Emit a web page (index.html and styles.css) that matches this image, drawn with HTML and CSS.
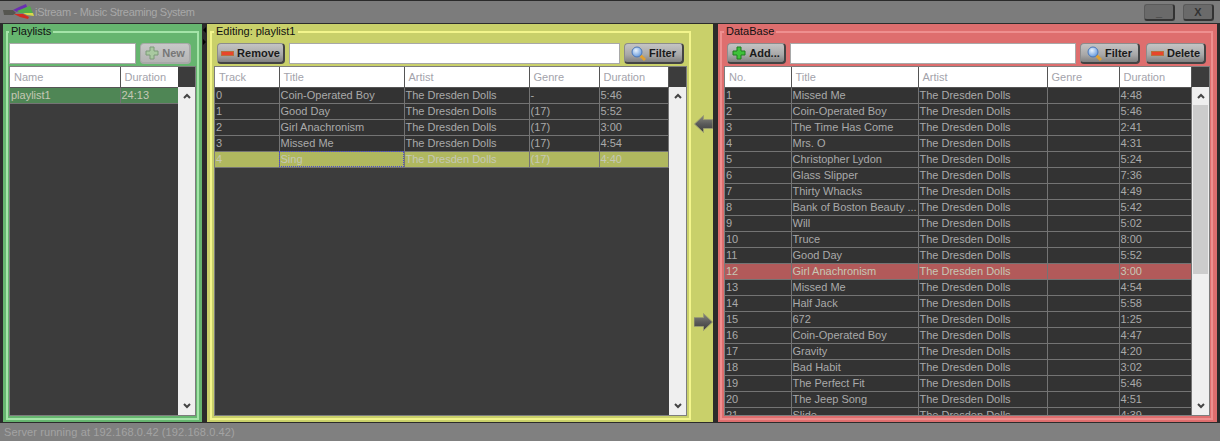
FILE: index.html
```html
<!DOCTYPE html>
<html lang="en">
<head>
  <meta charset="UTF-8" />
  <title>iStream - Music Streaming System</title>
  <link rel="stylesheet" href="styles.css">
</head>
<body>
  <svg class="defs" width="0" height="0">
    <defs>
      <linearGradient id="arrowfill" x1="0" y1="0" x2="0" y2="1">
        <stop offset="0" stop-color="#8a8a80"/>
        <stop offset="0.5" stop-color="#5a5a5a"/>
        <stop offset="1" stop-color="#3e3e3e"/>
      </linearGradient>
      <radialGradient id="lens" cx="0.4" cy="0.35" r="0.7">
        <stop offset="0" stop-color="#e8f2fc"/>
        <stop offset="1" stop-color="#5d94dc"/>
      </radialGradient>
    </defs>
  </svg>

  <div class="titlebar">
    <svg class="logo" width="31" height="16" viewBox="0 0 31 16">
      <path d="M0 6 L10 6 L13 9 L10 11 L1 11 Z" fill="#565650"/>
      <path d="M10 6 L16 3 L23 0 L24 3 L14 8 Z" fill="#6a2fb0"/>
      <path d="M14 7 L24 3 L27 2 L30 9 L17 9 Z" fill="#52ad4a"/>
      <path d="M20 9 L30 9 L31 12 L24 11 Z" fill="#d8d84a"/>
      <path d="M11 10 L20 10 L26 13 L25 15 L17 13 Z" fill="#d42a20"/>
    </svg>
    <span class="title">iStream - Music Streaming System</span>
    <div class="winbtns">
      <button class="winbtn">_</button>
      <button class="winbtn">X</button>
    </div>
  </div>

  <div class="main">
    <section class="panel green">
      <fieldset class="group">
        <legend>Playlists</legend>
        <div class="tools">
          <input class="search" type="text">
          <button class="btn disabled new">
            <svg width="14" height="14" viewBox="0 0 14 14"><path d="M5 1h4v4h4v4H9v4H5V9H1V5h4z" fill="#a9c9a0" stroke="#7d9a78"/></svg>New
          </button>
        </div>
        <div class="grid">
          <div class="tablewrap">
            <table>
              <colgroup><col class="c-name"><col class="c-pdur"></colgroup>
              <thead><tr><th>Name</th><th>Duration</th></tr></thead>
              <tbody><tr class="sel"><td>playlist1</td><td>24:13</td></tr></tbody>
            </table>
          </div>
          <div class="scrollcol">
            <div class="corner"></div>
            <div class="scrollbar">
              <svg class="chev" width="8" height="6" viewBox="0 0 8 6"><path d="M1 5 L4 2 L7 5" fill="none" stroke="#444" stroke-width="2"/></svg>
              <svg class="chev down" width="8" height="6" viewBox="0 0 8 6"><path d="M1 1 L4 4 L7 1" fill="none" stroke="#444" stroke-width="2"/></svg>
            </div>
          </div>
        </div>
      </fieldset>
    </section>

    <div class="splitter">
      <i class="tri left"></i>
      <i class="tri right"></i>
    </div>

    <section class="panel yellow">
      <fieldset class="group">
        <legend>Editing: playlist1</legend>
        <div class="tools">
          <button class="btn remove">
            <svg width="13" height="5" viewBox="0 0 13 5"><rect x="0.5" y="0.5" width="12" height="4" fill="#e8452c" stroke="#b8703c"/></svg>Remove
          </button>
          <input class="search" type="text">
          <button class="btn filter">
            <svg width="15" height="15" viewBox="0 0 15 15"><path d="M9 9 L14 14" stroke="#e0a030" stroke-width="3"/><circle cx="6" cy="6" r="5" fill="url(#lens)" stroke="#4c78b8"/></svg>Filter
          </button>
        </div>
        <div class="grid">
          <div class="tablewrap">
            <table>
              <colgroup><col class="c-track"><col class="c-title"><col class="c-artist"><col class="c-genre"><col class="c-dur"></colgroup>
              <thead><tr><th>Track</th><th>Title</th><th>Artist</th><th>Genre</th><th>Duration</th></tr></thead>
              <tbody>
                <tr><td>0</td><td>Coin-Operated Boy</td><td>The Dresden Dolls</td><td>-</td><td>5:46</td></tr>
                <tr><td>1</td><td>Good Day</td><td>The Dresden Dolls</td><td>(17)</td><td>5:52</td></tr>
                <tr><td>2</td><td>Girl Anachronism</td><td>The Dresden Dolls</td><td>(17)</td><td>3:00</td></tr>
                <tr><td>3</td><td>Missed Me</td><td>The Dresden Dolls</td><td>(17)</td><td>4:54</td></tr>
                <tr class="sel"><td>4</td><td class="focus">Sing</td><td>The Dresden Dolls</td><td>(17)</td><td>4:40</td></tr>
              </tbody>
            </table>
          </div>
          <div class="scrollcol">
            <div class="corner"></div>
            <div class="scrollbar">
              <svg class="chev" width="8" height="6" viewBox="0 0 8 6"><path d="M1 5 L4 2 L7 5" fill="none" stroke="#444" stroke-width="2"/></svg>
              <svg class="chev down" width="8" height="6" viewBox="0 0 8 6"><path d="M1 1 L4 4 L7 1" fill="none" stroke="#444" stroke-width="2"/></svg>
            </div>
          </div>
        </div>
      </fieldset>
      <div class="arrows">
        <svg width="19" height="18" viewBox="0 0 19 18"><path d="M0.5 9 L9.5 0.5 V4.5 H19 V13.5 H9.5 V17.5 Z" fill="url(#arrowfill)" stroke="#9a9c70"/></svg>
        <svg width="19" height="18" viewBox="0 0 19 18"><path d="M18.5 9 L9.5 0.5 V4.5 H0 V13.5 H9.5 V17.5 Z" fill="url(#arrowfill)" stroke="#9a9c70"/></svg>
      </div>
    </section>

    <div class="splitter"></div>

    <section class="panel red">
      <fieldset class="group">
        <legend>DataBase</legend>
        <div class="tools">
          <button class="btn add">
            <svg width="14" height="14" viewBox="0 0 14 14"><path d="M5 1h4v4h4v4H9v4H5V9H1V5h4z" fill="#3ec23a" stroke="#1f7d1f"/></svg>Add...
          </button>
          <input class="search" type="text">
          <button class="btn filter">
            <svg width="15" height="15" viewBox="0 0 15 15"><path d="M9 9 L14 14" stroke="#e0a030" stroke-width="3"/><circle cx="6" cy="6" r="5" fill="url(#lens)" stroke="#4c78b8"/></svg>Filter
          </button>
          <button class="btn delete">
            <svg width="13" height="5" viewBox="0 0 13 5"><rect x="0.5" y="0.5" width="12" height="4" fill="#e8452c" stroke="#b8703c"/></svg>Delete
          </button>
        </div>
        <div class="grid">
          <div class="tablewrap">
            <table>
              <colgroup><col class="c-no"><col class="c-dtitle"><col class="c-dartist"><col class="c-dgenre"><col class="c-ddur"></colgroup>
              <thead><tr><th>No.</th><th>Title</th><th>Artist</th><th>Genre</th><th>Duration</th></tr></thead>
              <tbody>
                <tr><td>1</td><td>Missed Me</td><td>The Dresden Dolls</td><td></td><td>4:48</td></tr>
                <tr><td>2</td><td>Coin-Operated Boy</td><td>The Dresden Dolls</td><td></td><td>5:46</td></tr>
                <tr><td>3</td><td>The Time Has Come</td><td>The Dresden Dolls</td><td></td><td>2:41</td></tr>
                <tr><td>4</td><td>Mrs. O</td><td>The Dresden Dolls</td><td></td><td>4:31</td></tr>
                <tr><td>5</td><td>Christopher Lydon</td><td>The Dresden Dolls</td><td></td><td>5:24</td></tr>
                <tr><td>6</td><td>Glass Slipper</td><td>The Dresden Dolls</td><td></td><td>7:36</td></tr>
                <tr><td>7</td><td>Thirty Whacks</td><td>The Dresden Dolls</td><td></td><td>4:49</td></tr>
                <tr><td>8</td><td>Bank of Boston Beauty ...</td><td>The Dresden Dolls</td><td></td><td>5:42</td></tr>
                <tr><td>9</td><td>Will</td><td>The Dresden Dolls</td><td></td><td>5:02</td></tr>
                <tr><td>10</td><td>Truce</td><td>The Dresden Dolls</td><td></td><td>8:00</td></tr>
                <tr><td>11</td><td>Good Day</td><td>The Dresden Dolls</td><td></td><td>5:52</td></tr>
                <tr class="sel"><td>12</td><td>Girl Anachronism</td><td>The Dresden Dolls</td><td></td><td>3:00</td></tr>
                <tr><td>13</td><td>Missed Me</td><td>The Dresden Dolls</td><td></td><td>4:54</td></tr>
                <tr><td>14</td><td>Half Jack</td><td>The Dresden Dolls</td><td></td><td>5:58</td></tr>
                <tr><td>15</td><td>672</td><td>The Dresden Dolls</td><td></td><td>1:25</td></tr>
                <tr><td>16</td><td>Coin-Operated Boy</td><td>The Dresden Dolls</td><td></td><td>4:47</td></tr>
                <tr><td>17</td><td>Gravity</td><td>The Dresden Dolls</td><td></td><td>4:20</td></tr>
                <tr><td>18</td><td>Bad Habit</td><td>The Dresden Dolls</td><td></td><td>3:02</td></tr>
                <tr><td>19</td><td>The Perfect Fit</td><td>The Dresden Dolls</td><td></td><td>5:46</td></tr>
                <tr><td>20</td><td>The Jeep Song</td><td>The Dresden Dolls</td><td></td><td>4:51</td></tr>
                <tr><td>21</td><td>Slide</td><td>The Dresden Dolls</td><td></td><td>4:39</td></tr>
              </tbody>
            </table>
          </div>
          <div class="scrollcol">
            <div class="corner"></div>
            <div class="scrollbar">
              <svg class="chev" width="8" height="6" viewBox="0 0 8 6"><path d="M1 5 L4 2 L7 5" fill="none" stroke="#444" stroke-width="2"/></svg>
              <div class="thumb"></div>
              <svg class="chev down" width="8" height="6" viewBox="0 0 8 6"><path d="M1 1 L4 4 L7 1" fill="none" stroke="#444" stroke-width="2"/></svg>
            </div>
          </div>
        </div>
      </fieldset>
    </section>
  </div>

  <div class="statusbar">Server running at 192.168.0.42 (192.168.0.42)</div>
</body>
</html>
```

FILE: styles.css
```css
* {
  box-sizing: border-box;
}

body {
  margin: 0;
  width: 1220px;
  height: 441px;
  overflow: hidden;
  display: flex;
  flex-direction: column;
  font-family: "Liberation Sans", Arial, sans-serif;
  font-size: 11px;
  background: #808080;
}

.defs {
  position: absolute;
}

/* title bar */
.titlebar {
  height: 23px;
  flex: none;
  display: flex;
  align-items: center;
  padding: 0 6px 0 3px;
  background: #7c7c7c;
  border-top: 1px solid #2a2a2a;
}

.logo {
  flex: none;
}

.title {
  margin-left: 1px;
  font-size: 11px;
  letter-spacing: -0.3px;
  color: #a8a8a8;
}

.winbtns {
  margin-left: auto;
  display: flex;
  gap: 8px;
}

.winbtn {
  width: 31px;
  height: 17px;
  padding: 0;
  font: bold 11px "Liberation Sans", sans-serif;
  color: #333;
  background: #6a6a6a;
  border: 1px solid #5a5a5a;
  border-right: 2px solid #333;
  border-bottom: 2px solid #333;
  border-radius: 3px;
}

/* main area */
.main {
  flex: 1;
  min-height: 0;
  display: flex;
  padding: 1px 3px;
  background: #2b2b2b;
}

.panel {
  display: flex;
  flex: none;
  min-width: 0;
}

.green {
  width: 199px;
  background: #66b56f;
  --light: #a4e4a8;
  --sel: #4f8655;
}

.yellow {
  width: 506px;
  background: #c9d06a;
  --light: #f3f58c;
  --sel: #b0b85f;
}

.red {
  width: 499px;
  background: #de6e6e;
  --light: #ee8f8f;
  --sel: #b25a5a;
}

.splitter {
  width: 5px;
  flex: none;
  position: relative;
}

.tri {
  position: absolute;
  left: 1px;
  width: 0;
  height: 0;
  border-top: 3px solid transparent;
  border-bottom: 3px solid transparent;
}

.tri.left {
  top: 3px;
  border-right: 3px solid #000;
}

.tri.right {
  top: 15px;
  border-left: 3px solid #000;
}

.group {
  flex: none;
  min-width: 0;
  margin: 1px 3px 2px 3px;
  padding: 5px 1px 2px 1px;
  border: 2px solid var(--light);
  display: flex;
  flex-direction: column;
  gap: 2px;
}

.green .group {
  width: 193px;
}

.yellow .group {
  width: 481px;
  padding: 5px 2px 2px 2px;
}

.red .group {
  width: 493px;
  margin: 1px 4px 2px 2px;
  padding: 5px 1px 2px 2px;
}

legend {
  padding: 0 2px;
  font-size: 11px;
  line-height: 13px;
  color: #111;
}

.tools {
  display: flex;
  gap: 4px;
  flex: none;
  height: 21px;
}

.green .tools {
  padding-right: 5px;
}

.yellow .tools {
  padding: 0 3px;
}

.red .tools {
  padding: 0 4px 0 3px;
}

.red .tools .delete {
  margin-left: 2px;
}

.search {
  flex: 1;
  min-width: 0;
  height: 21px;
  background: #fff;
  border: 1px solid #a8a8a8;
}

.btn {
  flex: none;
  height: 21px;
  padding: 0;
  display: flex;
  align-items: center;
  justify-content: center;
  gap: 3px;
  font: bold 11px "Liberation Sans", sans-serif;
  color: #1a1a1a;
  background: linear-gradient(#c4c4c4, #a8a8a8 60%, #808080);
  border: 1px solid #8c8c8c;
  border-right: 2px solid #444;
  border-bottom: 2px solid #444;
  border-radius: 4px;
}

.btn.disabled {
  color: #777;
  background: linear-gradient(#c8c8c8, #b4b4b4);
  border-color: #a8a8a8;
}

.new { width: 51px; }
.remove { width: 68px; }
.filter { width: 60px; }
.add { width: 59px; }
.delete { width: 60px; }

/* tables */
.grid {
  flex: 1;
  min-height: 0;
  display: flex;
  background: #3c3c3c;
  border: 1px solid #7d7d7d;
}

.tablewrap {
  flex: 1;
  min-width: 0;
  overflow: hidden;
}

table {
  width: 100%;
  table-layout: fixed;
  border-collapse: collapse;
}

th {
  height: 20px;
  padding: 0 0 0 4px;
  text-align: left;
  font-weight: normal;
  color: #a3a3ab;
  background: #fff;
  border-right: 1px solid #555;
  border-bottom: 1px solid #555;
}

td {
  height: 16px;
  padding: 0 0 0 1px;
  line-height: 15px;
  white-space: nowrap;
  overflow: hidden;
  color: #aaaaaa;
  background: #333;
  border-right: 1px solid #747474;
  border-bottom: 1px solid #747474;
}

.sel td {
  color: #c6c8b6;
  background: var(--sel);
}

td.focus {
  outline: 1px dotted #4a4ad0;
  outline-offset: -1px;
}

.c-name { width: 110px; }
.c-pdur { width: 58px; }

.c-track { width: 64px; }
.c-title { width: 125px; }
.c-artist { width: 125px; }
.c-genre { width: 70px; }

.c-no { width: 66px; }
.c-dtitle { width: 127px; }
.c-dartist { width: 129px; }
.c-dgenre { width: 72px; }

.scrollcol {
  width: 17px;
  flex: none;
  display: flex;
  flex-direction: column;
}

.corner {
  height: 20px;
  flex: none;
}

.scrollbar {
  flex: 1;
  display: flex;
  flex-direction: column;
  align-items: center;
  padding: 6px 0;
  background: #efefef;
}

.chev.down {
  margin-top: auto;
}

.thumb {
  height: 169px;
  width: 15px;
  margin-top: 6px;
  background: #cccccc;
}

.arrows {
  flex: 1;
  display: flex;
  flex-direction: column;
  align-items: center;
  gap: 180px;
  padding-top: 91px;
}

/* status bar */
.statusbar {
  height: 18px;
  flex: none;
  padding: 0 0 0 4px;
  font-size: 11px;
  letter-spacing: 0.1px;
  line-height: 18px;
  color: #a3a3a3;
  background: #808080;
}
```
